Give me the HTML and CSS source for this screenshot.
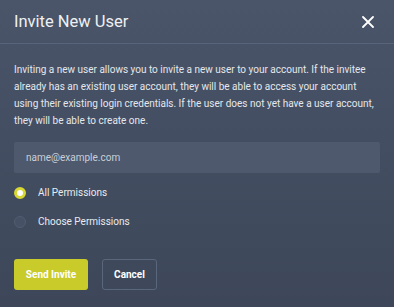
FILE: index.html
```html
<!DOCTYPE html>
<html lang="en">
<head>
    <meta charset="UTF-8">
    <title>Invite New User</title>
    <link rel="stylesheet" href="styles.css">
</head>
<body>
    <div class="modal">
        <div class="modal-header">
            <h1>Invite New User</h1>
            <button class="close" aria-label="Close">
                <svg width="12" height="12" viewBox="0 0 12 12">
                    <path d="M1 1L11 11M11 1L1 11" stroke="#fff" stroke-width="1.8" stroke-linecap="round"/>
                </svg>
            </button>
        </div>
        <div class="modal-body">
            <p class="intro">Inviting a new user allows you to invite a new user to your account. If the invitee already has an existing user account, they will be able to access your account using their existing login credentials. If the user does not yet have a user account, they will be able to create one.</p>

            <input type="email" class="email" placeholder="name@example.com">

            <label class="radio">
                <input type="radio" name="perm" checked>
                <span class="dot"></span>
                All Permissions
            </label>
            <label class="radio">
                <input type="radio" name="perm">
                <span class="dot"></span>
                Choose Permissions
            </label>

            <div class="actions">
                <button class="btn btn-primary">Send Invite</button>
                <button class="btn btn-outline">Cancel</button>
            </div>
        </div>
    </div>
</body>
</html>
```

FILE: styles.css
```css
body {
    margin: 0;
    font-family: 'Roboto', 'Liberation Sans', sans-serif;
    background: #3e4859;
    color: #e6e9ee;
}

.modal {
    width: 394px;
    height: 307px;
    background: linear-gradient(180deg, #4a5569 0%, #434e62 45%, #3d4759 100%);
    overflow: hidden;
}

.modal-header {
    display: flex;
    align-items: center;
    justify-content: space-between;
    height: 43px;
    padding: 0 20px 0 14px;
    border-bottom: 1px solid #58647a;
}

.modal-header h1 {
    margin: 0;
    font-size: 16.5px;
    font-weight: 400;
    color: #eef0f3;
}

.close {
    background: none;
    border: none;
    padding: 0;
    display: flex;
    cursor: pointer;
}

.modal-body {
    padding: 17px 14px 0;
}

.intro {
    margin: 0 0 13px;
    font-size: 10px;
    line-height: 17px;
    color: #e4e7ec;
}

.email {
    display: block;
    width: 100%;
    height: 31px;
    box-sizing: border-box;
    padding: 0 12px;
    border: none;
    border-radius: 2px;
    background: #4e596d;
    color: #fff;
    font-family: inherit;
    font-size: 10px;
    margin-bottom: 5px;
}

.email::placeholder {
    color: #c9ced7;
}

.radio {
    display: flex;
    align-items: center;
    gap: 12px;
    height: 29px;
    font-size: 10px;
    color: #e8ebef;
    cursor: pointer;
}

.radio input {
    display: none;
}

.dot {
    width: 12px;
    height: 12px;
    border-radius: 50%;
    box-sizing: border-box;
    background: #465165;
    border: 1px solid #525d72;
}

.radio input:checked + .dot {
    background: #fff;
    border: 3px solid #d7d832;
}

.actions {
    display: flex;
    gap: 14px;
    margin-top: 23px;
}

.btn {
    height: 31px;
    border-radius: 3px;
    font-family: inherit;
    font-size: 10px;
    font-weight: 700;
    color: #fff;
    cursor: pointer;
}

.btn-primary {
    width: 74px;
    background: #c9cb2a;
    border: none;
}

.btn-outline {
    width: 55px;
    background: transparent;
    border: 1px solid #5a667b;
}
```
